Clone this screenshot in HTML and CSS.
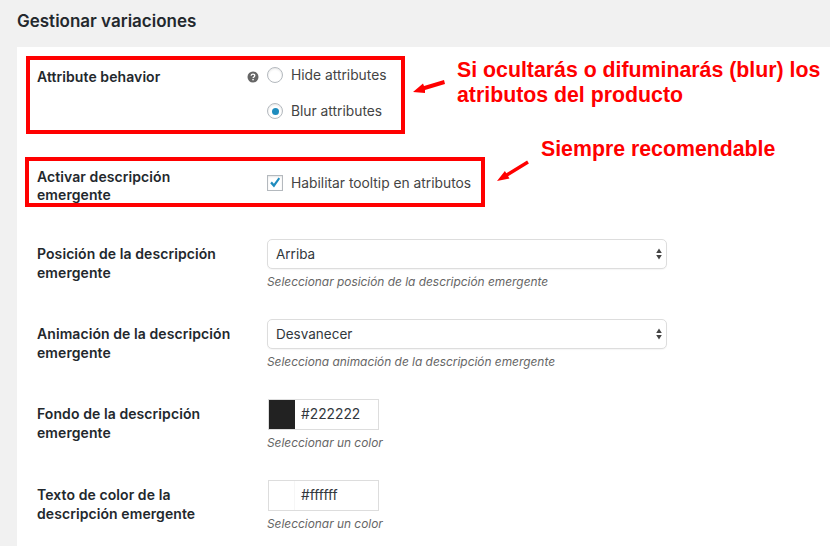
FILE: index.html
```html
<!DOCTYPE html>
<html lang="es">
<head>
<meta charset="utf-8">
<title>Gestionar variaciones</title>
<link rel="stylesheet" href="styles.css">
</head>
<body>
<div class="page">
  <h2 class="title">Gestionar variaciones</h2>
  <div class="panel">
    <div class="row row-radio">
      <div class="label label-help">
        <span>Attribute behavior</span>
        <svg class="help" viewBox="0 0 12 12" width="12" height="12"><circle cx="6" cy="6" r="5.5" fill="#666"/><path d="M4.2 4.8C4.2 3.7 5 3.1 6 3.1s1.8.6 1.8 1.5c0 1.3-1.700 1.300-1.700 2.500" fill="none" stroke="#fff" stroke-width="1.3"/><rect x="5.3" y="7.9" width="1.5" height="1.4" fill="#fff"/></svg>
      </div>
      <div class="options">
        <label class="option"><input type="radio" name="b" class="radio"><span>Hide attributes</span></label>
        <label class="option"><input type="radio" name="b" class="radio" checked><span>Blur attributes</span></label>
      </div>
    </div>
    <div class="row row-check">
      <div class="label">Activar descripción<br>emergente</div>
      <label class="option option-check">
        <input type="checkbox" class="check" checked>
        <svg class="tick" viewBox="0 0 16 16" width="16" height="16"><path d="M3.2 8.2l1.7-1.6 2 2.2 4.6-6.3 1.6 1.2-6.1 8.8z" fill="#1e8cbe"/></svg>
        <span>Habilitar tooltip en atributos</span>
      </label>
    </div>
    <div class="row">
      <div class="label">Posición de la descripción<br>emergente</div>
      <div>
        <div class="select"><span>Arriba</span><svg viewBox="0 0 6 12" width="6" height="12"><path d="M3 .5L5.8 5H.2zM3 11.5L.2 7h5.6z" fill="#444"/></svg></div>
        <p class="desc">Seleccionar posición de la descripción emergente</p>
      </div>
    </div>
    <div class="row">
      <div class="label">Animación de la descripción<br>emergente</div>
      <div>
        <div class="select"><span>Desvanecer</span><svg viewBox="0 0 6 12" width="6" height="12"><path d="M3 .5L5.8 5H.2zM3 11.5L.2 7h5.6z" fill="#444"/></svg></div>
        <p class="desc">Selecciona animación de la descripción emergente</p>
      </div>
    </div>
    <div class="row">
      <div class="label">Fondo de la descripción<br>emergente</div>
      <div>
        <div class="color"><span class="swatch swatch-dark"></span><span class="hex">#222222</span></div>
        <p class="desc">Seleccionar un color</p>
      </div>
    </div>
    <div class="row">
      <div class="label">Texto de color de la<br>descripción emergente</div>
      <div>
        <div class="color"><span class="swatch swatch-light"></span><span class="hex">#ffffff</span></div>
        <p class="desc">Seleccionar un color</p>
      </div>
    </div>
  </div>

  <div class="mark mark-one"></div>
  <div class="mark mark-two"></div>
  <svg class="arrows" viewBox="0 0 830 546" width="830" height="546">
    <polygon points="413,92 423,83.5 424,86 444,80 445,84 425,90 425,93" fill="#f00"/>
    <polygon points="497,181 504.900,170.900 506.300,173.200 527.100,160.500 528.900,163.500 508.100,176.200 509.500,178.500" fill="#f00"/>
  </svg>
  <p class="note note-one">Si ocultarás o difuminarás (blur) los<br>atributos del producto</p>
  <p class="note note-two">Siempre recomendable</p>
</div>
</body>
</html>
```
FILE: styles.css
```css
* { box-sizing: border-box; }
html, body { margin: 0; padding: 0; }
body {
  width: 830px;
  height: 546px;
  overflow: hidden;
  background: #f1f1f1;
  font-family: Inter, "Liberation Sans", sans-serif;
  color: #23282d;
}
.page { position: relative; width: 830px; height: 546px; overflow: hidden; display: flex; flex-direction: column; }
.title { flex: none; margin: 0; padding: 12px 0 0 17px; height: 47px; font-size: 17px; line-height: 19px; font-weight: 600; }
.panel { flex: 1; min-height: 0; margin-left: 17px; padding: 8px 0 0 20px; background: #fff; }
.row { display: grid; grid-template-columns: 230px 400px; padding: 12px 0 17px; }
.row-radio { height: 112px; padding: 12px 0 0; }
.row-check { height: 60px; padding: 0; }
.label { font-size: 14px; letter-spacing: .08px; font-weight: 600; line-height: 19px; padding-top: 5px; }
.row-radio .label { padding-top: 0; }
.row-check .label { padding-top: 1px; line-height: 18px; }
.label-help { display: flex; justify-content: space-between; align-items: flex-start; padding-right: 8px; }
.help { margin-top: 4px; }
.options { display: flex; flex-direction: column; gap: 16px; margin-top: -2px; }
.option { display: flex; align-items: center; gap: 8px; height: 20px; font-size: 13.800px; color: #444; position: relative; }
.option-check { margin-top: 6px; }
.radio, .check { appearance: none; -webkit-appearance: none; margin: 0; width: 16px; height: 16px; background: #fff; border: 1px solid #b4b9be; box-shadow: inset 0 1px 2px rgba(0,0,0,.1); flex: none; }
.radio { border-radius: 50%; position: relative; }
.radio:checked::after { content: ""; position: absolute; left: 3.500px; top: 3.500px; width: 7px; height: 7px; border-radius: 50%; background: #1e8cbe; }
.tick { position: absolute; left: 0; top: 2px; }
.select { display: flex; justify-content: space-between; align-items: center; width: 400px; height: 30px; padding: 0 4px 0 8px; border: 1px solid #ddd; border-radius: 5px; font-size: 13.500px; color: #32373c; box-shadow: 0 1px 1px rgba(0,0,0,.04); background: #fff; }
.desc { margin: 5px 0 0; font-size: 11.900px; line-height: 16px; font-style: italic; color: #666; }
.color { display: flex; align-items: stretch; margin-left: 1px; width: 111px; height: 31px; border: 1px solid #ddd; font-size: 13.800px; color: #32373c; background: #fff; }
.swatch { width: 26px; flex: none; }
.swatch-dark { background: #222; }
.swatch-light { background: #fff; border-right: 1px solid #f6f6f6; }
.hex { padding-left: 6px; line-height: 29px; }
.mark { position: absolute; border: 4px solid #f00; }
.mark-one { left: 26px; top: 56px; width: 379px; height: 78px; }
.mark-two { left: 25px; top: 157px; width: 460px; height: 50px; }
.arrows { position: absolute; left: 0; top: 0; }
.note { position: absolute; margin: 0; font-family: "Liberation Sans", Arial, sans-serif; font-weight: 700; font-size: 21.300px; line-height: 25px; color: #f00; white-space: nowrap; }
.note-one { left: 457px; top: 58px; }
.note-two { left: 541px; top: 137px; }
```
